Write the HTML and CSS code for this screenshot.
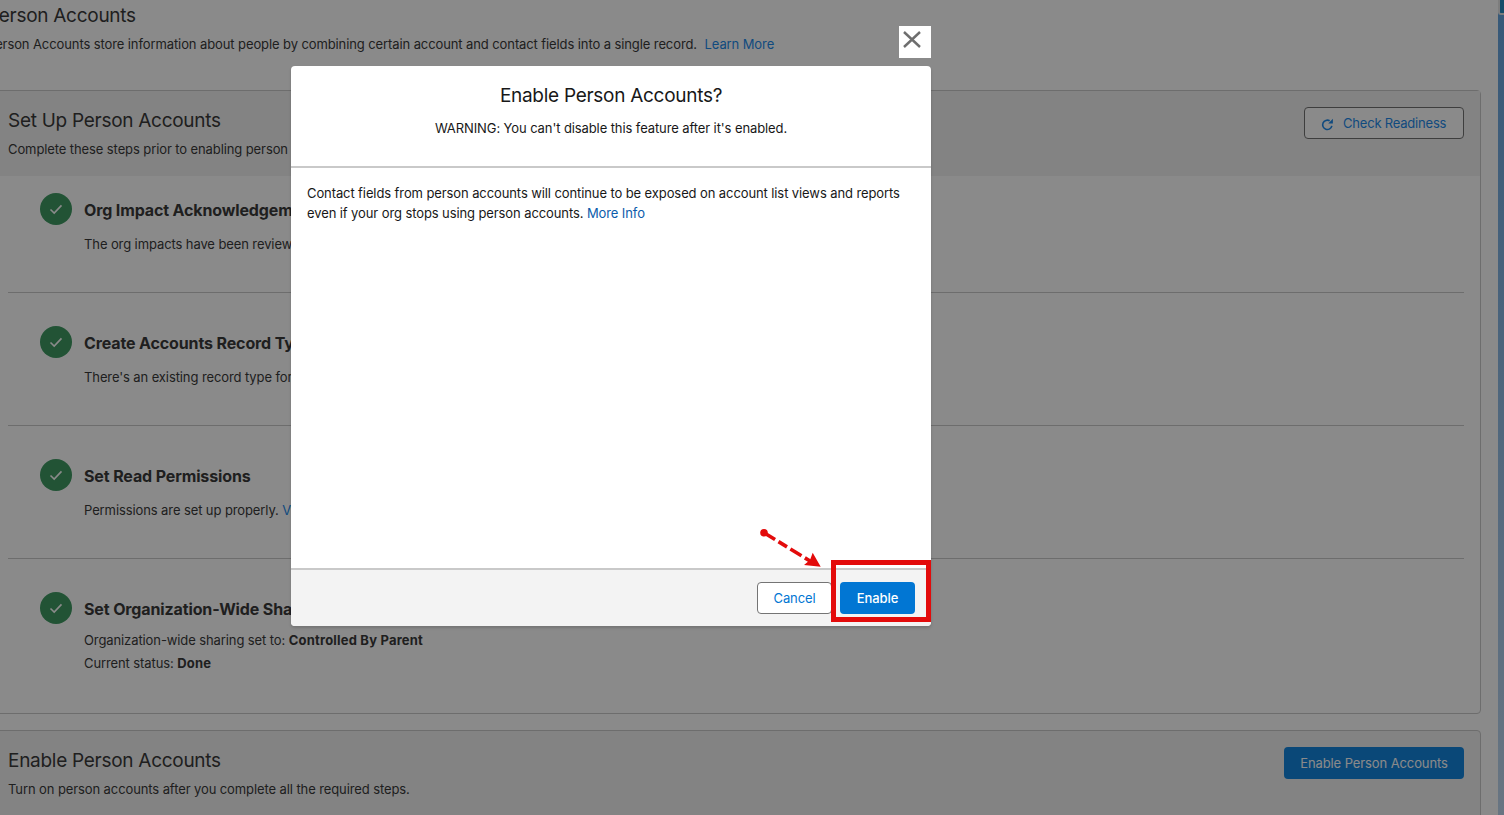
FILE: index.html
```html
<!DOCTYPE html>
<html lang="en">
<head>
<meta charset="utf-8">
<title>Person Accounts</title>
<link rel="stylesheet" href="styles.css">
</head>
<body>
<div class="viewport">
  <main class="page">
    <header class="page-head">
      <h1>Person Accounts</h1>
      <p>Person Accounts store information about people by combining certain account and contact fields into a single record. <a href="#" class="learn">Learn More</a></p>
    </header>
    <section class="card setup">
      <div class="card-head">
        <div>
          <h2>Set Up Person Accounts</h2>
          <p>Complete these steps prior to enabling person accounts.</p>
        </div>
        <button class="btn-outline"><svg class="refresh" viewBox="0 0 14 14" width="13" height="13"><path d="M11.700 8.400A5 5 0 1 1 9.300 3" fill="none" stroke="currentColor" stroke-width="1.700"/><path d="M12.800 .8v5H7.800z" fill="currentColor"/></svg>Check Readiness</button>
      </div>
      <ul class="steps">
        <li class="step">
          <span class="tick"><svg viewBox="0 0 16 16" width="16" height="16"><path d="M2.500 8.500l3.700 3.500 7.300-7.600" fill="none" stroke="#fff" stroke-width="1.600"/></svg></span>
          <div>
            <h3>Org Impact Acknowledgement</h3>
            <p>The org impacts have been reviewed and acknowledged.</p>
          </div>
        </li>
        <li class="step">
          <span class="tick"><svg viewBox="0 0 16 16" width="16" height="16"><path d="M2.500 8.500l3.700 3.500 7.300-7.600" fill="none" stroke="#fff" stroke-width="1.600"/></svg></span>
          <div>
            <h3>Create Accounts Record Type</h3>
            <p>There's an existing record type for accounts.</p>
          </div>
        </li>
        <li class="step">
          <span class="tick"><svg viewBox="0 0 16 16" width="16" height="16"><path d="M2.500 8.500l3.700 3.500 7.300-7.600" fill="none" stroke="#fff" stroke-width="1.600"/></svg></span>
          <div>
            <h3>Set Read Permissions</h3>
            <p>Permissions are set up properly. <a href="#">View</a></p>
          </div>
        </li>
        <li class="step last">
          <span class="tick"><svg viewBox="0 0 16 16" width="16" height="16"><path d="M2.500 8.500l3.700 3.500 7.300-7.600" fill="none" stroke="#fff" stroke-width="1.600"/></svg></span>
          <div>
            <h3>Set Organization-Wide Sharing</h3>
            <p class="tight">Organization-wide sharing set to: <b>Controlled By Parent</b></p>
            <p class="tight">Current status: <b>Done</b></p>
          </div>
        </li>
      </ul>
    </section>
    <section class="card enable">
      <div>
        <h2>Enable Person Accounts</h2>
        <p>Turn on person accounts after you complete all the required steps.</p>
      </div>
      <button class="btn-solid">Enable Person Accounts</button>
    </section>
  </main>
  <aside class="edge"><span class="edge-thumb"></span></aside>
  <div class="backdrop"></div>
  <button class="close" aria-label="Close"><svg viewBox="0 0 18 17" width="18" height="17"><path d="M1 1l16 15M17 1L1 16" stroke="#6e6e6e" stroke-width="2.400" fill="none"/></svg></button>
  <div class="modal">
    <div class="modal-head">
      <h2>Enable Person Accounts?</h2>
      <p>WARNING: You can't disable this feature after it's enabled.</p>
    </div>
    <div class="modal-body">
      <p>Contact fields from person accounts will continue to be exposed on account list views and reports even if your org stops using person accounts. <a href="#">More Info</a></p>
    </div>
    <div class="modal-foot">
      <button class="m-cancel">Cancel</button>
      <button class="m-enable">Enable</button>
    </div>
  </div>
  <div class="mark-box"></div>
  <svg class="mark-arrow" viewBox="0 0 70 45" width="70" height="45">
    <circle cx="4" cy="4.700" r="3.800" fill="#e30b0b"/>
    <path d="M4 4.700L50 33" stroke="#e30b0b" stroke-width="3.600" stroke-dasharray="13 4 10 4" fill="none"/>
    <path d="M60.700 38.700L44 37 50 32 52.700 24.700z" fill="#e30b0b"/>
  </svg>
</div>
</body>
</html>
```
FILE: styles.css
```css
* { box-sizing: border-box; }
html, body { margin: 0; height: 100%; }
body { font-family: Inter, "Liberation Sans", sans-serif; font-size: 13px; letter-spacing: -.1px; color: #181818; }
.viewport { position: relative; width: 1504px; height: 815px; overflow: hidden; display: flex; background: #fff; }
h1, h2, h3, p, ul { margin: 0; padding: 0; }
a { color: #0b5cab; text-decoration: none; }
button { font-family: inherit; font-size: 13px; letter-spacing: inherit; }

.page { width: 1507px; flex: none; margin-left: -9px; padding-right: 17px; background: #fff; color: #3a3a3a; }
.page a { color: #1e8aea; }
.page-head { height: 90px; padding-top: 2px; margin-left: -4px; }
.page-head h1 { font-size: 19px; letter-spacing: -.28px; font-weight: 400; line-height: 27px; }
.page-head p { line-height: 20px; margin-top: 5px; }
.learn { margin-left: 4px; }

.card { border: 1px solid #c9c9c9; border-radius: 4px; background: #fff; }
.card h2 { font-size: 19px; letter-spacing: -.28px; font-weight: 400; line-height: 27px; }
.card-head { display: flex; justify-content: space-between; height: 85px; padding: 16px 16px 0; background: #f3f3f3; }
.card-head p, .enable p { margin-top: 6px; line-height: 18px; }
.setup { height: 624px; }

.btn-outline { display: flex; align-items: center; gap: 9px; width: 160px; height: 32px; padding: 0 0 0 16px; background: #fff; border: 1px solid #747474; border-radius: 4px; color: #1e8aea; letter-spacing: -.2px; }
.refresh { margin-top: 3px; }
.steps { list-style: none; padding: 0 16px; }
.step { display: flex; gap: 12px; height: 133px; padding: 33px 0 0 32px; border-bottom: 1px solid #c9c9c9; }
.step:first-child { height: 117px; padding-top: 17px; }
.step.last { border-bottom: 0; }
.step h3 { font-size: 16px; font-weight: 700; letter-spacing: -.13px; line-height: 22px; margin-top: 6px; }
.step p { margin-top: 14px; line-height: 18px; }
.step p.tight { margin-top: 5px; }
.step p.tight:nth-of-type(1) { margin-top: 11px; }
.step b { font-weight: 700; letter-spacing: .2px; }
.tick { width: 32px; height: 32px; flex: none; border-radius: 50%; background: #3f9a63; display: flex; align-items: center; justify-content: center; }

.enable { display: flex; justify-content: space-between; margin-top: 16px; height: 120px; padding: 16px 16px 0; background: #f3f3f3; }
.btn-solid { width: 180px; height: 32px; background: #1385de; border: 0; border-radius: 4px; color: #fff; }

.edge { flex: 1; position: relative; background: linear-gradient(#64a3de, #c0d8f0); }
.edge-thumb { position: absolute; left: 0; top: 0; width: 6px; height: 15px; background: #2a8fc4; border-left: 2px solid #e8e8e8; border-bottom: 2px solid #e8e8e8; border-radius: 0 0 0 3px; }

.backdrop { position: absolute; inset: 0; background: rgba(0, 0, 0, .46); }

.close { position: absolute; left: 899px; top: 26px; width: 32px; height: 32px; padding: 5px 0 0 4px; border: 0; background: #fff; display: flex; align-items: flex-start; justify-content: flex-start; }
.modal { position: absolute; left: 291px; top: 66px; width: 640px; height: 560px; background: #fff; border-radius: 4px; display: flex; flex-direction: column; overflow: hidden; box-shadow: 0 2px 3px rgba(0, 0, 0, .16); }
.modal-head { height: 102px; border-bottom: 2px solid #c9c9c9; text-align: center; padding-top: 16px; }
.modal-head h2 { font-size: 19px; letter-spacing: -.28px; font-weight: 400; line-height: 27px; }
.modal-head p { margin-top: 10px; line-height: 18px; }
.modal-body { flex: 1; padding: 15px 16px; line-height: 20px; }
.modal-foot { height: 58px; background: #f3f3f3; border-top: 2px solid #c9c9c9; display: flex; justify-content: flex-end; align-items: flex-start; gap: 8px; padding: 12px 16px 0 0; }
.m-cancel { width: 75px; height: 32px; background: #fff; border: 1px solid #747474; border-radius: 4px; color: #0176d3; }
.m-enable { width: 75px; height: 32px; background: #0176d3; border: 0; border-radius: 4px; color: #fff; font-weight: 500; }

.mark-box { position: absolute; left: 831px; top: 560px; width: 100px; height: 62px; border: 5px solid #e30b0b; }
.mark-arrow { position: absolute; left: 760px; top: 528px; }
```
